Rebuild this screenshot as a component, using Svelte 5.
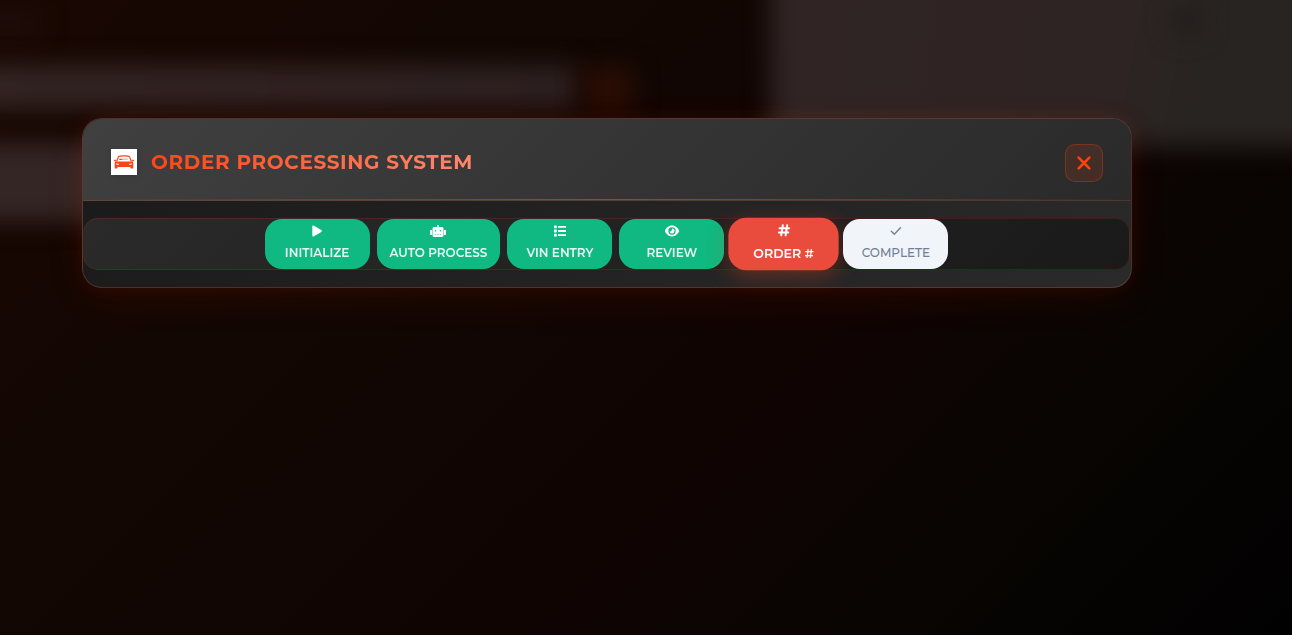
<script>
  const steps = [
    { label: 'Initialize', icon: 'play', state: 'done' },
    { label: 'Auto Process', icon: 'robot', state: 'done' },
    { label: 'VIN Entry', icon: 'list', state: 'done' },
    { label: 'Review', icon: 'eye', state: 'done' },
    { label: 'Order #', icon: 'hash', state: 'active' },
    { label: 'Complete', icon: 'check', state: 'pending' }
  ];
</script>

<div class="overlay">
  <div class="backdrop" aria-hidden="true">
    <div class="shape corner"></div>
    <div class="shape bar"></div>
    <div class="shape accent"></div>
    <div class="shape side"></div>
    <div class="shape panel"></div>
    <div class="shape dot"></div>
  </div>

  <section class="modal" role="dialog" aria-labelledby="modal-title">
    <header>
      <div class="brand">
        <svg class="logo" viewBox="0 0 26 26" aria-hidden="true">
          <path fill="#fff" d="M0 0h26v26H0z" />
          <path fill="none" stroke="#fb4515" stroke-width="1.200" d="M5.800 12.300l1.300-3.700c.3-.9.700-1.300 1.500-1.400q4.400-.7 8.800 0c.8.1 1.200.5 1.500 1.400l1.300 3.700" />
          <path fill="#fb4515" d="M5.500 12.500h15l1.200-1.900 1.400.3-.1 1-1.500.4c.6.7.8 1.500.8 2.400v4c0 .6-.4.900-1 .9h-.9c-.6 0-1-.4-1-1v-.7H6.600v.7c0 .6-.4 1-1 1h-.9c-.6 0-1-.3-1-.9v-4c0-.9.200-1.700.8-2.400L3 11.900l-.1-1 1.400-.3z" />
          <path fill="#fff" d="M5.300 14.200l2.700.7-.5 1-2.200-.3zM20.700 14.200l-2.700.7.5 1 2.200-.3z" />
          <path fill="none" stroke="#555" stroke-width="1" d="M8.200 10.300h3.300" />
          <path fill="none" stroke="#d99a8b" stroke-width="1" d="M11.700 10.100h5" />
        </svg>
        <h1 id="modal-title">ORDER PROCESSING SYSTEM</h1>
      </div>
      <button class="close" type="button" aria-label="Close">
        <svg viewBox="0 0 14 14" aria-hidden="true"><path d="M1.700 1.700l10.600 10.600M12.300 1.700L1.700 12.300" /></svg>
      </button>
    </header>

    <div class="content">
      <nav aria-label="Order steps">
        {#each steps as step}
          <button type="button" class="step {step.state}" aria-current={step.state === 'active' ? 'step' : undefined}>
            <svg viewBox="0 0 16 12" aria-hidden="true">
              {#if step.icon === 'play'}
                <path fill="currentColor" d="M3.300 1.500C3.300.6 4.200.2 5 .7l7.300 4.400c.7.4.7 1.400 0 1.800L5 11.300c-.8.5-1.700.1-1.700-.8z" />
              {:else if step.icon === 'robot'}
                <path fill="currentColor" fill-rule="evenodd" d="M7.300 0h1.400v2h3.100c1 0 1.700.7 1.700 1.700v6.600c0 1-.7 1.700-1.700 1.700H4.200c-1 0-1.700-.7-1.700-1.700V3.700c0-1 .7-1.700 1.700-1.700h3.100zM5.500 5a.8.8 0 100 1.600.8.8 0 000-1.600zm5 0a.8.8 0 100 1.600.8.8 0 000-1.600zM4.800 9v.6h1.500V9zm2.400 0v.6h1.600V9zm2.500 0v.6h1.500V9z" />
                <path fill="currentColor" d="M2.100 5v5H.7c-.4 0-.7-.3-.7-.7V5.700c0-.4.3-.7.7-.7zM13.900 5h1.400c.4 0 .7.300.7.700v3.600c0 .4-.3.700-.7.700h-1.400z" />
              {:else if step.icon === 'list'}
                <path fill="currentColor" d="M2.600.5h1.600c.4 0 .6.200.6.600v1.600c0 .4-.2.600-.6.600H2.600c-.4 0-.6-.2-.6-.6V1.100c0-.4.200-.6.600-.6zm0 4.100h1.600c.4 0 .6.200.6.600v1.600c0 .4-.2.600-.6.600H2.600c-.4 0-.6-.2-.6-.6V5.200c0-.4.200-.6.600-.6zm0 4.100h1.600c.4 0 .6.200.6.600v1.600c0 .4-.2.600-.6.600H2.600c-.4 0-.6-.2-.6-.6V9.300c0-.4.200-.6.600-.6zM6 1h8v1.800H6zm0 4.100h8v1.800H6zm0 4.100h8V11H6z" />
              {:else if step.icon === 'eye'}
                <path fill="currentColor" fill-rule="evenodd" d="M8 .5c3.500 0 5.900 2.500 7 4.900.2.400.2.800 0 1.200-1.100 2.400-3.500 4.900-7 4.900S2.100 9 1 6.600c-.2-.4-.2-.8 0-1.200C2.100 3 4.500.5 8 .5zm0 1.800a3.700 3.700 0 100 7.400 3.700 3.700 0 000-7.400zm0 1.200a2.500 2.500 0 11-2.400 3c1.500.3 2.600-1 2.300-2.500z" />
              {:else if step.icon === 'hash'}
                <path fill="none" stroke="currentColor" stroke-width="1.900" stroke-linecap="round" d="M6.800 1.200L5.300 10.800M11 1.200L9.500 10.800M3.700 3.900h9M3.100 8.100h9" />
              {:else}
                <path fill="none" stroke="currentColor" stroke-width="1.400" stroke-linecap="round" stroke-linejoin="round" d="M3.300 6.200l3 3 6.200-6.400" />
              {/if}
            </svg>
            <span>{step.label}</span>
          </button>
        {/each}
      </nav>
    </div>
  </section>
</div>

<style>
  :global(body) { margin: 0; background: #050201; }
  * { box-sizing: border-box; }
  .overlay {
    position: relative;
    min-height: 100vh;
    padding: 118px 160px 40px 82px;
    overflow: hidden;
    font-family: Montserrat, Inter, sans-serif;
    background: linear-gradient(135deg, #190702 0%, #120703 30%, #100403 60%, #080502 78%, #020102 100%);
  }
  .backdrop { position: absolute; inset: 0; overflow: hidden; }
  .shape { position: absolute; filter: blur(12px); }
  .corner { left: -40px; top: 5px; width: 80px; height: 35px; background: #1e0c09; }
  .bar { left: -40px; top: 65px; width: 616px; height: 44px; background: linear-gradient(90deg, #332523, #2d2020); }
  .accent { left: 583px; top: 67px; width: 50px; height: 44px; background: #2b0e04; }
  .side { left: -40px; top: 143px; width: 200px; height: 78px; background: #342625; }
  .panel { left: 770px; right: -40px; top: -40px; height: 187px; background: linear-gradient(100deg, #302524, #2e2423 60%, #282421 75%, #282421); }
  .dot { right: 90px; top: 5px; width: 30px; height: 30px; background: #231e1e; }
  .modal {
    position: relative;
    border: 1px solid rgba(255, 125, 80, .22);
    border-radius: 20px;
    background: linear-gradient(135deg, #1a1a1a, #2a2a2a);
    box-shadow: 0 0 20px rgba(255, 69, 0, .08), 0 10px 40px rgba(255, 69, 0, .08);
  }
  header {
    position: relative;
    display: flex;
    align-items: flex-start;
    justify-content: space-between;
    padding: 25px 28px 18px;
    border-bottom: 1px solid rgba(255, 100, 50, .18);
    border-radius: 19px 19px 0 0;
    background: linear-gradient(135deg, #404040, #2a2a2a);
  }
  header::after {
    content: '';
    position: absolute;
    inset: auto 0 0;
    height: 1px;
    background: linear-gradient(90deg, transparent, rgba(255, 80, 35, .55), transparent);
  }
  .brand { display: flex; align-items: center; gap: 14px; height: 36px; }
  .logo { width: 26px; height: 26px; filter: drop-shadow(0 2px 3px rgba(0, 0, 0, .12)); }
  h1 {
    margin: 0;
    font-size: 20px;
    line-height: 26px;
    font-weight: 700;
    letter-spacing: .03em;
    color: transparent;
    background: linear-gradient(135deg, #ff4310, #ff8a70);
    background-clip: text;
  }
  .close {
    display: grid;
    place-items: center;
    width: 38px;
    height: 38px;
    padding: 0;
    border: 1px solid rgba(255, 69, 0, .3);
    border-radius: 10px;
    background: rgba(255, 69, 0, .11);
    color: #ff4310;
  }
  .close svg { width: 14px; height: 14px; fill: none; stroke: currentColor; stroke-width: 2.600; stroke-linecap: round; }
  .content { padding: 17px 1px 17px 0; }
  nav {
    display: flex;
    justify-content: center;
    gap: 7px;
    border: 1px solid rgba(255, 69, 0, .15);
    border-radius: 15px;
    background: linear-gradient(135deg, #2a2a2a, #1a1a1a);
  }
  .step {
    position: relative;
    display: flex;
    flex-direction: column;
    align-items: center;
    gap: 8px;
    min-width: 105px;
    height: 50px;
    padding: 6px 13px;
    border: 0;
    border-radius: 17px;
    font: 600 12px/15px Montserrat, Inter, sans-serif;
    text-transform: uppercase;
    white-space: nowrap;
  }
  .step svg { width: 16px; height: 12px; }
  .done { background: #10b981; color: #fff; }
  .done span { opacity: .9; }
  .active {
    background: #e94c3c;
    color: #fff;
    transform: scale(1.05);
    box-shadow: 0 5px 20px rgba(255, 69, 30, .32);
  }
  .pending { background: #f1f4f9; color: #718096; font-weight: 500; }
</style>
